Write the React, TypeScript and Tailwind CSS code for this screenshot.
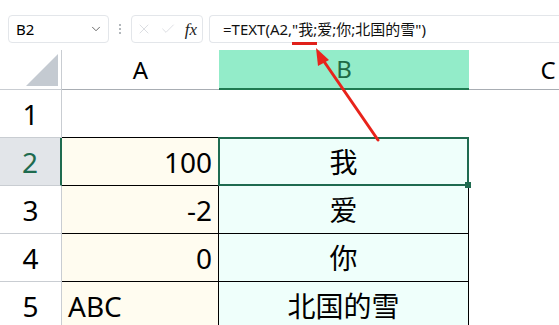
import { Check, ChevronDown, X } from 'lucide-react';

const font = { fontFamily: '"Noto Sans", "Noto Sans CJK SC", sans-serif' };

type Row = { n: number; a: string; b: string; alignA: 'left' | 'right' };

const rows: Row[] = [
  { n: 2, a: '100', b: '我', alignA: 'right' },
  { n: 3, a: '-2', b: '爱', alignA: 'right' },
  { n: 4, a: '0', b: '你', alignA: 'right' },
  { n: 5, a: 'ABC', b: '北国的雪', alignA: 'left' },
];

export default function App() {
  return (
    <div className="relative h-[325px] w-[559px] overflow-hidden bg-white text-black" style={font}>
      {/* formula bar */}
      <div className="flex h-[50px] items-start gap-[6px] pl-2 pt-[15px]">
        <div className="flex h-[28px] w-[101px] items-center justify-between rounded-[4px] border border-[#e3e6ea] pl-[7px] pr-[5px] text-[15px]">
          <span>B2</span>
          <ChevronDown size={14} strokeWidth={1.5} className="text-[#555]" />
        </div>
        <div className="flex h-[28px] w-[10px] flex-col items-center justify-center gap-[2px]">
          <span className="h-[2px] w-[2px] rounded-full bg-[#9aa0a6]" />
          <span className="h-[2px] w-[2px] rounded-full bg-[#9aa0a6]" />
          <span className="h-[2px] w-[2px] rounded-full bg-[#9aa0a6]" />
        </div>
        <div className="flex h-[28px] w-[72px] items-center gap-[8px] rounded-[4px] border border-[#e3e6ea] pl-[4px] pr-[5px]">
          <X size={16} strokeWidth={1.2} className="text-[#d3d6da]" />
          <Check size={16} strokeWidth={1.2} className="text-[#d3d6da]" />
          <span className="ml-auto text-[17px] italic leading-none text-[#222]" style={{ fontFamily: '"Liberation Serif", "DejaVu Serif", serif' }}>
            fx
          </span>
        </div>
        <div className="flex h-[28px] flex-1 items-center rounded-l-[4px] border border-r-0 border-[#e3e6ea] pl-[13px] text-[15px] text-[#111]">
          <span>=TEXT(A2,</span>
          <span className="relative">
            "我;
            <span className="absolute -bottom-[5px] left-0 h-[3px] w-full bg-[#e0201a]" />
          </span>
          <span>爱;你;北国的雪")</span>
        </div>
      </div>

      {/* sheet */}
      <div className="grid grid-cols-[62px_157px_250px_158px] grid-rows-[40px_48px_48px_48px_48px_48px]">
        <div className="relative border-r border-b border-[#c9cdd2]">
          <div
            className="absolute right-[3px] bottom-[3px] h-[32px] w-[32px] bg-[#c4cad1]"
            style={{ clipPath: 'polygon(100% 0, 100% 100%, 0 100%)' }}
          />
        </div>
        <div className="flex items-center justify-center border-b border-[#a8adb3] text-[24px]">A</div>
        <div className="flex items-center justify-center border-b-2 border-[#1e7a50] bg-[#93ecc9] text-[24px] text-[#1e6b46]">B</div>
        <div className="flex items-center justify-center border-b border-[#a8adb3] text-[24px]">C</div>

        <div className="flex items-center justify-center border-r border-b border-[#c9cdd2] text-[28px]">1</div>
        <div className="border-b border-black" />
        <div className="border-b border-black" />
        <div />

        {rows.map((r) => (
          <Cells key={r.n} row={r} />
        ))}
      </div>

      {/* annotation arrow */}
      <svg className="pointer-events-none absolute left-0 top-0" width="559" height="325">
        <line x1="378" y1="140" x2="323" y2="60" stroke="#e8231b" strokeWidth="3" strokeLinecap="round" />
        <polygon points="316,48 329,60 318,66" fill="#e8231b" />
      </svg>
    </div>
  );
}

function Cells({ row }: { row: Row }) {
  const selected = row.n === 2;
  return (
    <>
      <div
        className={
          selected
            ? 'flex items-center justify-center border-r-2 border-b border-r-[#1e6b4f] border-b-[#c9cdd2] bg-[#e2e5e9] text-[28px] text-[#1e6b4f]'
            : 'flex items-center justify-center border-r border-b border-[#c9cdd2] text-[28px]'
        }
      >
        {row.n}
      </div>
      <div
        className={
          row.alignA === 'right'
            ? 'flex items-center justify-end border-r border-b border-black bg-[#fffcf0] pr-[6px] text-[28px]'
            : 'flex items-center justify-start border-r border-b border-black bg-[#fffcf0] pl-[6px] text-[28px]'
        }
      >
        {row.a}
      </div>
      {selected ? (
        <div className="relative -mt-px -ml-px flex items-center justify-center border-2 border-[#1f6b50] bg-[#effffb] text-[28px]">
          {row.b}
          <span className="absolute -right-[4px] -bottom-[4px] h-[6px] w-[6px] bg-[#1f6b50]" />
        </div>
      ) : (
        <div className="flex items-center justify-center border-r border-b border-black bg-[#effffb] text-[28px]">{row.b}</div>
      )}
      <div />
    </>
  );
}
